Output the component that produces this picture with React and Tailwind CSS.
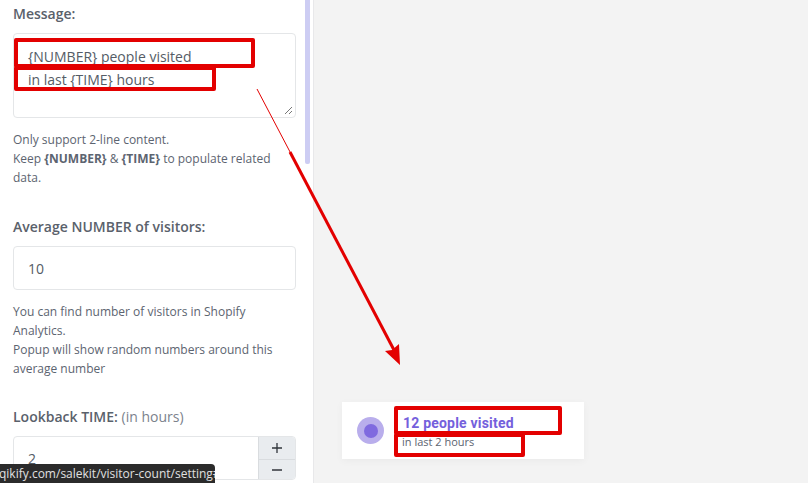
import React from 'react';

const Box = ({ className }) => (
    <div className={`absolute border-[4px] border-[#e30000] rounded-[2px] ${className}`} />
);

const App = () => {
    return (
        <div className="relative flex w-[808px] h-[483px] overflow-hidden bg-[#f3f3f3] font-['Open_Sans','Noto_Sans',sans-serif] text-[#5c6470]">
            {/* settings panel */}
            <div className="relative w-[314px] h-full shrink-0 bg-white border-r border-[#e8e8ea] pl-[13px] pr-[17px] overflow-hidden">
                <div className="absolute right-[3px] top-0 w-[5px] h-[164px] bg-[#cdcdf3] rounded-b-[2px]" />
                <label className="block mt-[3px] text-[14px] leading-[21px] font-semibold text-[#5a616b]">Message:</label>
                <div className="relative mt-[9px] w-[283px] h-[85px] border border-[#e4e6e8] rounded-[4px] pl-[14px] pt-[11px] text-[14px] leading-[23px] text-[#545c66]">
                    <div>{'{NUMBER} people visited'}</div>
                    <div>{'in last {TIME} hours'}</div>
                    <svg className="absolute right-[2px] bottom-[2px]" width="9" height="9" viewBox="0 0 9 9">
                        <path d="M1 8 L8 1 M5 8 L8 5" stroke="#777" strokeWidth="1" />
                    </svg>
                </div>
                <p className="mt-[12px] w-[283px] text-[12px] leading-[19px]">
                    Only support 2-line content.<br />
                    Keep <b className="font-bold">{'{NUMBER}'}</b> &amp; <b className="font-bold">{'{TIME}'}</b> to populate related data.
                </p>
                <label className="block mt-[29px] text-[14px] leading-[21px] font-semibold text-[#5a616b]">Average NUMBER of visitors:</label>
                <div className="mt-[9px] w-[283px] h-[44px] flex items-center border border-[#e4e6e8] rounded-[4px] pl-[14px] text-[14px] text-[#545c66]">10</div>
                <p className="mt-[12px] w-[283px] text-[12px] leading-[19px]">
                    You can find number of visitors in Shopify Analytics.<br />
                    Popup will show random numbers around this average number
                </p>
                <label className="block mt-[28px] text-[14px] leading-[21px] font-semibold text-[#5a616b]">
                    Lookback TIME: <span className="font-normal text-[#7b828c]">(in hours)</span>
                </label>
                <div className="mt-[9px] w-[283px] h-[44px] flex border border-[#e4e6e8] rounded-[4px] overflow-hidden">
                    <div className="flex-1 pl-[14px] pt-[11px] text-[14px] text-[#545c66]">2</div>
                    <div className="w-[37px] flex flex-col bg-[#e9ecef] border-l border-[#d9dcdf] text-[#30353b]">
                        <div className="h-[23px] flex items-center justify-center border-b border-[#d9dcdf]">
                            <svg width="12" height="12" viewBox="0 0 12 12"><path d="M6 1v10M1 6h10" stroke="currentColor" strokeWidth="1.3" /></svg>
                        </div>
                        <div className="flex-1 flex items-center justify-center">
                            <svg width="12" height="12" viewBox="0 0 12 12"><path d="M1 6h10" stroke="currentColor" strokeWidth="1.3" /></svg>
                        </div>
                    </div>
                </div>
            </div>

            {/* preview popup */}
            <div className="absolute left-[342px] top-[402px] w-[242px] h-[57px] bg-white shadow-[0_2px_8px_rgba(0,0,0,0.04)] flex items-center pl-[16px]">
                <div className="w-[26px] h-[26px] mr-[19px] shrink-0" />
                <div className="pt-[1px]">
                    <div className="text-[14px] leading-[20px] font-bold text-[#7460dc] font-['Roboto',sans-serif] tracking-[0.2px]">12 people visited</div>
                    <div className="text-[11px] leading-[16px] text-[#5c6470] mt-[1px] -ml-[1px]">in last 2 hours</div>
                </div>
            </div>
            <div className="absolute left-[357px] top-[417px] w-[27px] h-[27px] rounded-full bg-[#b9aeec] border-[0px]" />
            <div className="absolute left-[364px] top-[424px] w-[14px] h-[14px] rounded-full bg-[#7f6adf]" />

            {/* red annotations */}
            <Box className="left-[14px] top-[38px] w-[241px] h-[30px]" />
            <Box className="left-[14px] top-[66px] w-[202px] h-[25px]" />
            <Box className="left-[394px] top-[406px] w-[168px] h-[29px]" />
            <Box className="left-[394px] top-[433px] w-[131px] h-[24px]" />
            <svg className="absolute left-0 top-0 pointer-events-none" width="808" height="483" viewBox="0 0 808 483">
                <path d="M257 89 L394 350" stroke="#e30000" strokeWidth="1" fill="none" />
                <path d="M290 152 L394 350" stroke="#e30000" strokeWidth="3" fill="none" />
                <path d="M400 365 L385 351 L392 350 L399 344 Z" fill="#e30000" />
            </svg>

            {/* link status tooltip */}
            <div className="absolute left-0 bottom-0 h-[19px] w-[215px] bg-[#2b2b2b] rounded-tr-[4px] text-[#e0e0e0] text-[12px] leading-[19px] whitespace-nowrap overflow-hidden">
                <span className="block -ml-[1px]">qikify.com/salekit/visitor-count/setting#</span>
            </div>
        </div>
    );
};

export default App;
